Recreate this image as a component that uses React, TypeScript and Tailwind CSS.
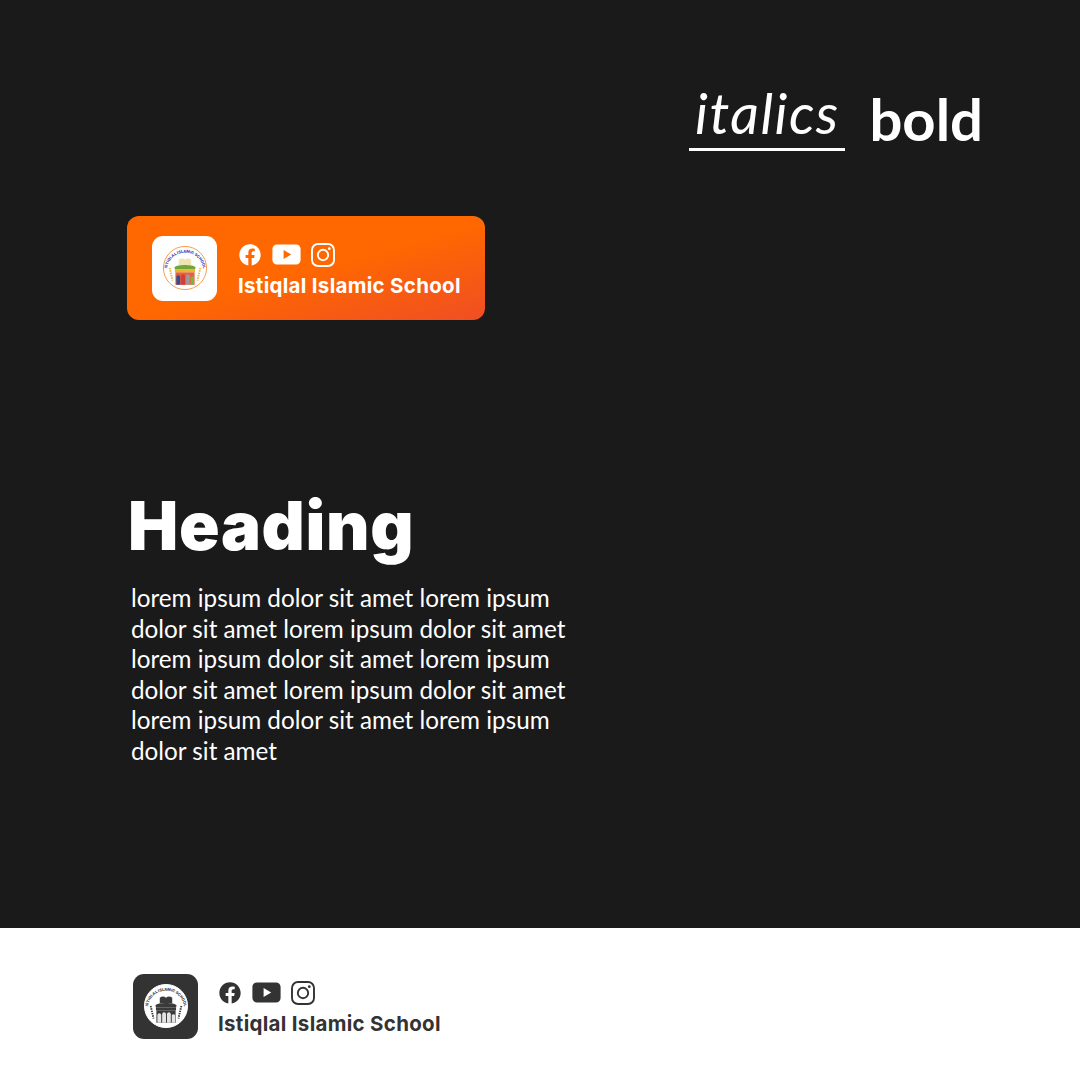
import React from "react";
import { FaFacebook } from "react-icons/fa";

const YoutubeIcon = ({ className }: { className: string }) => (
  <svg viewBox="0 0 29 21" className={className} fill="currentColor">
    <path
      fillRule="evenodd"
      d="M5 0.5H24C26.6 0.5 28.6 2.5 28.6 5V16C28.6 18.5 26.6 20.5 24 20.5H5C2.4 20.5 0.4 18.5 0.4 16V5C0.4 2.5 2.4 0.5 5 0.5ZM11.6 6V15L19.2 10.5Z"
    />
  </svg>
);

const InstagramIcon = ({ className }: { className: string }) => (
  <svg viewBox="0 0 24 24" className={className} fill="none" stroke="currentColor">
    <rect x="1" y="1" width="22" height="22" rx="6" strokeWidth="1.9" />
    <circle cx="12" cy="12" r="5.2" strokeWidth="1.9" />
    <circle cx="18.3" cy="5.7" r="1.4" fill="currentColor" stroke="none" />
  </svg>
);

const SocialIcons = () => (
  <div className="flex items-center pl-[1px]">
    <FaFacebook className="h-[22px] w-[22px]" />
    <YoutubeIcon className="ml-[11px] h-[21px] w-[29px]" />
    <InstagramIcon className="ml-[10px] h-[24px] w-[24px]" />
  </div>
);

// tiny school crest, colored on the orange card and mono on the footer
const Crest = ({ mono, id }: { mono?: boolean; id: string }) => {
  const ring = mono ? "#ffffff" : "#f59a4a";
  const label = mono ? "#3a3a3a" : "#2f3fb5";
  const book = mono ? "#3a3a3a" : "#efe3b0";
  const band = mono ? "#3a3a3a" : "#e9b52c";
  const roof = mono ? "#3a3a3a" : "#6fa53a";
  const wall = mono ? "#3a3a3a" : "#e8603a";
  const door = mono ? "#e4e4e4" : "#2c4f9e";
  const door2 = mono ? "#e4e4e4" : "#d93a35";
  const door3 = mono ? "#e4e4e4" : "#9a9a9a";
  const door4 = mono ? "#e4e4e4" : "#7fb04a";
  const sprig = mono ? "#3a3a3a" : "#eab93a";
  return (
    <svg viewBox="0 0 48 48" className="h-[46px] w-[46px]">
      <circle cx="24" cy="24" r="22.5" fill={mono ? "#ffffff" : "none"} stroke={ring} strokeWidth="1" />
      <defs>
        <path id={id} d="M5 27A19 19 0 0 1 43 27" />
      </defs>
      <text fontSize="4" fontWeight="800" fill={label} fontFamily="Inter, sans-serif">
        <textPath href={`#${id}`} startOffset="50%" textAnchor="middle">
          ISTIQLAL ISLAMIC SCHOOL
        </textPath>
      </text>
      <path d="M17.5 15.5c2.2-1.8 4.5-1.8 6.5 0 2-1.8 4.3-1.8 6.5 0v5.5h-13z" fill={book} />
      <path d="M13 23c3-3 19-3 22 0l-.5 2.5h-21z" fill={roof} />
      <rect x="13.5" y="25.5" width="21" height="3" fill={band} />
      <path d="M14 28.5h20V41.5H14z" fill={wall} />
      <path d="M15 41.5v-8a2 2 0 0 1 4 0v8z" fill={door} />
      <path d="M20 41.5v-9a2 2 0 0 1 4 0v9z" fill={door2} />
      <path d="M25 41.5v-9a2 2 0 0 1 4 0v9z" fill={door3} />
      <path d="M30 41.5v-8a2 2 0 0 1 3.4 0v8z" fill={door4} />
      <path d="M8 24l3 13M40 24l-3 13" stroke={sprig} strokeWidth="2" strokeDasharray="1.5 1" />
    </svg>
  );
};

const LogoBlock = ({
  mono,
  id,
  tile,
  text,
  gap,
}: {
  mono?: boolean;
  id: string;
  tile: string;
  text: string;
  gap: string;
}) => (
  <div className={`flex items-center ${gap} ${text}`}>
    <div className={`flex h-[65px] w-[65px] items-center justify-center rounded-[11px] ${tile}`}>
      <Crest mono={mono} id={id} />
    </div>
    <div className="flex flex-col gap-[7px] pt-[4px]">
      <SocialIcons />
      <p className="font-['Inter',sans-serif] text-[20.5px] leading-[24px] font-bold tracking-[0.3px] whitespace-nowrap">
        Istiqlal Islamic School
      </p>
    </div>
  </div>
);

const App = () => {
  return (
    <div className="flex h-[1080px] w-[1080px] flex-col overflow-hidden bg-white">
      <main className="flex h-[928px] flex-col bg-[#1a1a1a] pt-[84px] pl-[127px] text-white">
        {/* format toggle */}
        <div className="flex items-center justify-end gap-[24px] pr-[97px] font-['Lato',sans-serif]">
          <span className="h-[64px] w-[156px] border-b-[3px] border-white text-center text-[56px] leading-[52px] font-normal tracking-[1.5px] italic">
            italics
          </span>
          <span className="text-[58px] leading-[70px] font-bold">bold</span>
        </div>

        {/* orange badge */}
        <div className="mt-[62px] flex h-[104px] w-[358px] items-center rounded-[12px] bg-[linear-gradient(165deg,#ff6800_50%,#f04e23_100%)] pl-[25px]">
          <LogoBlock id="crest-color" tile="bg-white" text="text-white" gap="gap-[21px]" />
        </div>

        <h1 className="mt-[166px] pl-[1px] font-['Inter',sans-serif] text-[67px] leading-[80px] font-black tracking-[0.7px]">
          Heading
        </h1>
        <p className="mt-[17px] w-[450px] pl-[4px] font-['Lato',sans-serif] text-[24.25px] leading-[30.5px]">
          lorem ipsum dolor sit amet lorem ipsum dolor sit amet lorem ipsum dolor sit amet lorem ipsum dolor sit amet lorem ipsum dolor sit amet lorem ipsum dolor sit amet lorem ipsum dolor sit amet lorem ipsum dolor sit amet
        </p>
      </main>

      <footer className="flex flex-1 items-center pt-[4px] pl-[133px]">
        <LogoBlock mono id="crest-mono" tile="bg-[#333333]" text="text-[#333333]" gap="gap-[20px]" />
      </footer>
    </div>
  );
};

export default App;
